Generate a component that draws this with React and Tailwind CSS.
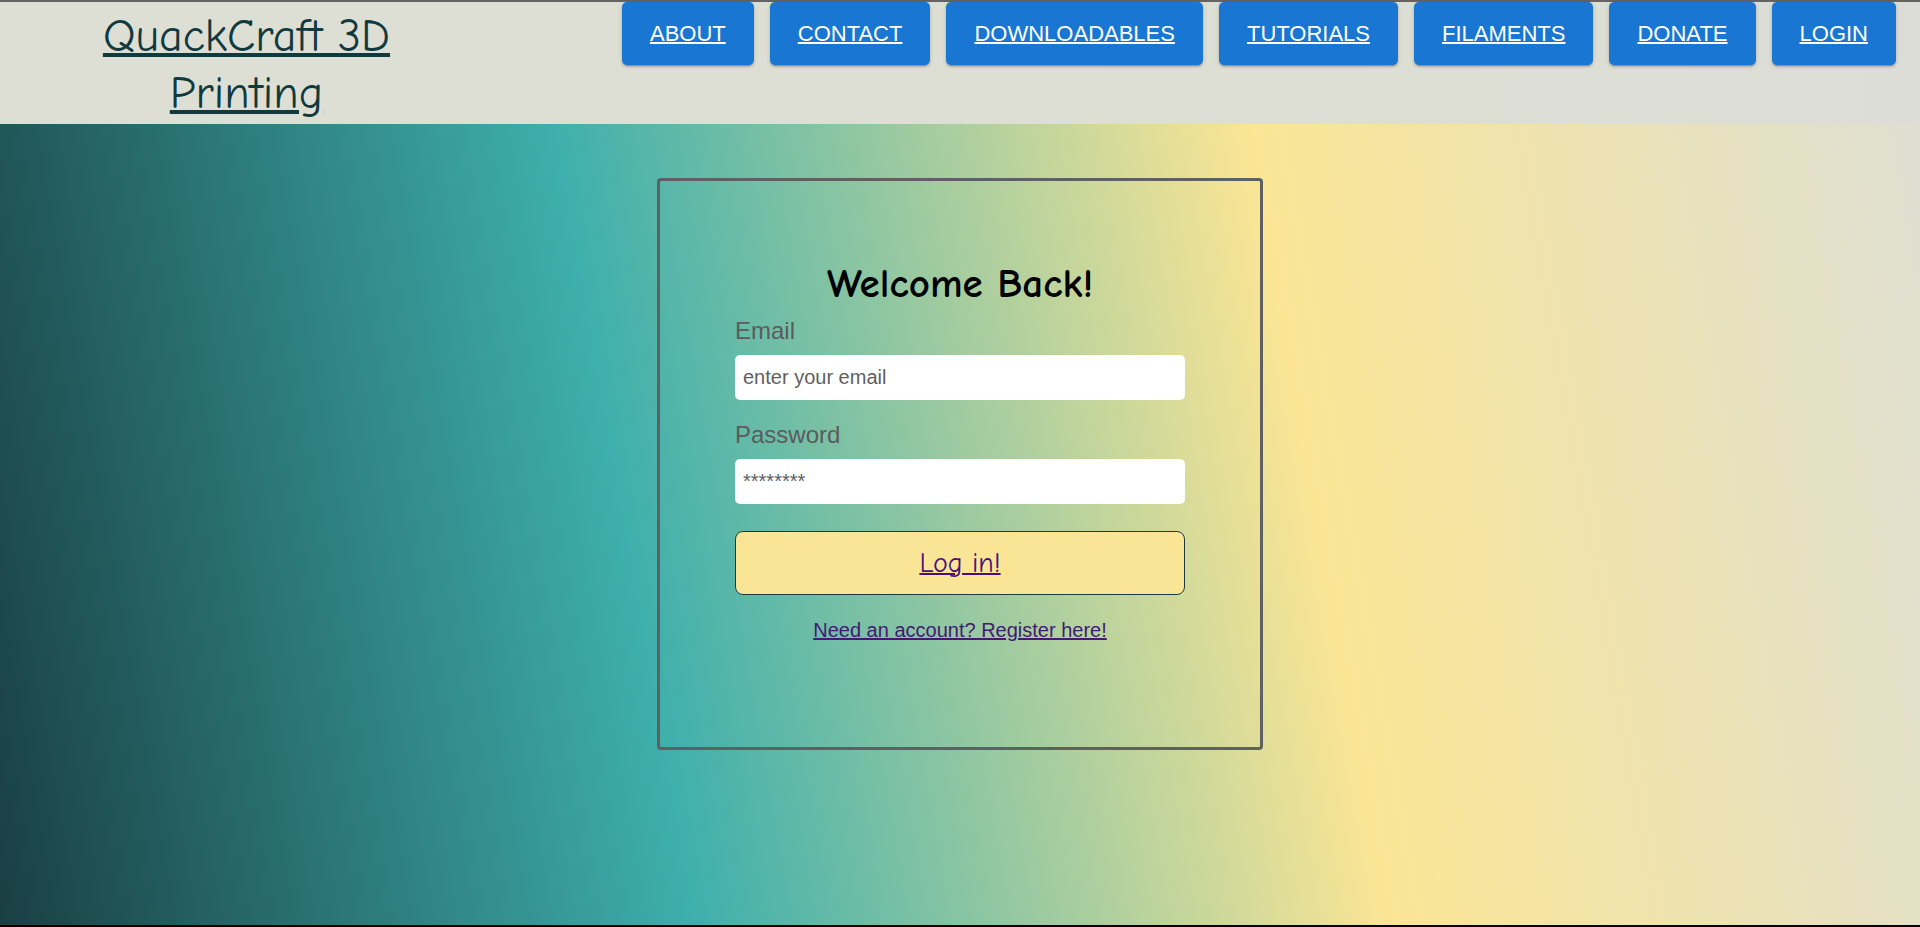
const links = ["About", "Contact", "Downloadables", "Tutorials", "Filaments", "Donate", "Login"];

const inputClass =
  "mt-[10px] h-[45px] w-full rounded-[5px] bg-white px-2 text-[20px] leading-6 text-[#757575] placeholder:text-[#5f5f5f] outline-none";

function Header() {
  return (
    <header className="flex items-start justify-between border-t-2 border-[#636361] bg-[linear-gradient(90deg,#dedfd4,#dddfd4_70%,#dcddd7)] pr-6">
      <div className="flex w-[26%] justify-center pt-1.5 pb-0.5">
        <a
          href="#home"
          className="max-w-[360px] text-center font-['Comic_Sans_MS','Comic_Neue','Noto_Sans',cursive] text-[46px] leading-[57px] text-[#103a40] underline decoration-4 [font-variant-ligatures:none]"
        >
          QuackCraft 3D Printing
        </a>
      </div>
      <nav className="flex gap-4">
        {links.map((name) => (
          <a
            key={name}
            href={"#" + name.toLowerCase()}
            className="flex h-[63px] items-center rounded-[5px] bg-[#1976d2] px-7 text-[22px] leading-9 text-white uppercase underline decoration-2 shadow-[0_3px_1px_-2px_rgba(0,0,0,0.2),0_2px_2px_0_rgba(0,0,0,0.14),0_1px_5px_0_rgba(0,0,0,0.12)]"
          >
            {name}
          </a>
        ))}
      </nav>
    </header>
  );
}

function LoginForm() {
  return (
    <form
      onSubmit={(e) => e.preventDefault()}
      className="w-full max-w-[606px] rounded-[4px] border-3 border-[#5f6062] px-[75px] pt-[75px] pb-[105px]"
    >
      <h1 className="text-center font-['Comic_Sans_MS','Comic_Neue','Noto_Sans',cursive] text-[41px] leading-14 font-bold text-black">
        Welcome Back!
      </h1>
      <label htmlFor="email" className="mt-[5px] block text-2xl leading-7 text-[#5b5b5d]">
        Email
      </label>
      <input id="email" type="email" placeholder="enter your email" className={inputClass} />
      <label htmlFor="password" className="mt-[21px] block text-2xl leading-7 text-[#5b5b5d]">
        Password
      </label>
      <input id="password" type="password" placeholder="********" className={inputClass} />
      <button
        type="submit"
        className="mt-[27px] h-16 w-full rounded-lg border border-[#1d3a40] bg-[#fae596] font-['Comic_Sans_MS','Comic_Neue','Noto_Sans',cursive] text-[28px] text-[#4b0f7c] underline decoration-2"
      >
        Log in!
      </button>
      <a href="#register" className="mt-[23px] block text-center text-[20px] leading-6 text-[#431a72] underline decoration-2">
        Need an account? Register here!
      </a>
    </form>
  );
}

export default function App() {
  return (
    <div className="flex min-h-screen flex-col border-b-2 border-black bg-[linear-gradient(80deg,#1a3f43,#3eafac,#fbe595,#dddfd4)] bg-origin-border font-['Liberation_Sans',Arial,sans-serif]">
      <Header />
      <main className="flex flex-1 items-start justify-center pt-[54px]">
        <LoginForm />
      </main>
    </div>
  );
}
